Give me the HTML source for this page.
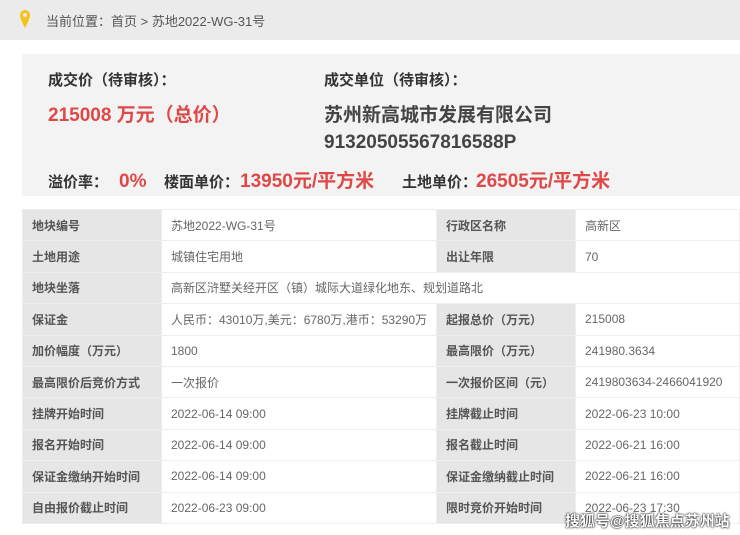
<!DOCTYPE html><html><head><meta charset="utf-8"><style>
body{margin:0;width:740px;height:535px;overflow:hidden;background:#fff;font-family:"Liberation Sans","Noto Sans CJK SC",sans-serif;position:relative}
.top{position:absolute;left:0;top:0;width:740px;height:40px;background:#ebebeb}
.top span{position:absolute;left:46px;top:11px;font-size:13px;color:#555}
.card{position:absolute;left:22px;top:54px;width:718px;height:142px;background:#f3f3f3}
.a{position:absolute;font-weight:bold;white-space:nowrap;line-height:24px;height:24px}
.l{font-size:15px;color:#333}
.r{font-size:19px;color:#e04848}
.g{font-size:19px;color:#444}
table{position:absolute;left:22px;top:209px;width:718px;border-collapse:collapse;font-size:12px}
td{height:30.4px;border:1px solid #eee;padding:0 0 0 9px;color:#666}
td.k{background:#e6e6e6;color:#555;font-weight:bold}
.wm{position:absolute;left:565px;top:510px;font-size:15px;font-weight:bold;color:#fff;text-shadow:0 0 2px #000,0 0 1px #000}
</style></head><body>
<div class="top"><svg style="position:absolute;left:19px;top:9px" width="12" height="20" viewBox="0 0 12 20"><path d="M6 1a5 5 0 0 1 5 5c0 4-5 13-5 13S1 10 1 6a5 5 0 0 1 5-5z" fill="#f5c21b"/><circle cx="6" cy="6" r="2" fill="#ebebeb"/></svg><span>当前位置：首页 &gt; 苏地2022-WG-31号</span></div>
<div class="card">
<div class="a l" style="left:26px;top:15px">成交价（待审核）：</div>
<div class="a l" style="left:302px;top:15px">成交单位（待审核）：</div>
<div class="a r" style="left:26px;top:50px">215008 万元（总价）</div>
<div class="a g" style="left:302px;top:50px">苏州新高城市发展有限公司</div>
<div class="a g" style="left:302px;top:77px">91320505567816588P</div>
<div class="a l" style="left:26px;top:117px">溢价率：</div>
<div class="a r" style="left:97px;top:116px">0%</div>
<div class="a l" style="left:142px;top:117px">楼面单价：</div>
<div class="a r" style="left:218px;top:116px">13950元/平方米</div>
<div class="a l" style="left:380px;top:117px">土地单价：</div>
<div class="a r" style="left:454px;top:116px">26505元/平方米</div>
</div>
<table>
<colgroup><col style="width:139px"><col style="width:275px"><col style="width:139px"><col></colgroup>
<tr><td class="k">地块编号</td><td>苏地2022-WG-31号</td><td class="k">行政区名称</td><td>高新区</td></tr>
<tr><td class="k">土地用途</td><td>城镇住宅用地</td><td class="k">出让年限</td><td>70</td></tr>
<tr><td class="k">地块坐落</td><td colspan="3">高新区浒墅关经开区（镇）城际大道绿化地东、规划道路北</td></tr>
<tr><td class="k">保证金</td><td>人民币：43010万,美元：6780万,港币：53290万</td><td class="k">起报总价（万元）</td><td>215008</td></tr>
<tr><td class="k">加价幅度（万元）</td><td>1800</td><td class="k">最高限价（万元）</td><td>241980.3634</td></tr>
<tr><td class="k">最高限价后竞价方式</td><td>一次报价</td><td class="k">一次报价区间（元）</td><td>2419803634-2466041920</td></tr>
<tr><td class="k">挂牌开始时间</td><td>2022-06-14 09:00</td><td class="k">挂牌截止时间</td><td>2022-06-23 10:00</td></tr>
<tr><td class="k">报名开始时间</td><td>2022-06-14 09:00</td><td class="k">报名截止时间</td><td>2022-06-21 16:00</td></tr>
<tr><td class="k">保证金缴纳开始时间</td><td>2022-06-14 09:00</td><td class="k">保证金缴纳截止时间</td><td>2022-06-21 16:00</td></tr>
<tr><td class="k">自由报价截止时间</td><td>2022-06-23 09:00</td><td class="k">限时竞价开始时间</td><td>2022-06-23 17:30</td></tr>
</table>
<div class="wm">搜狐号@搜狐焦点苏州站</div>
</body></html>
